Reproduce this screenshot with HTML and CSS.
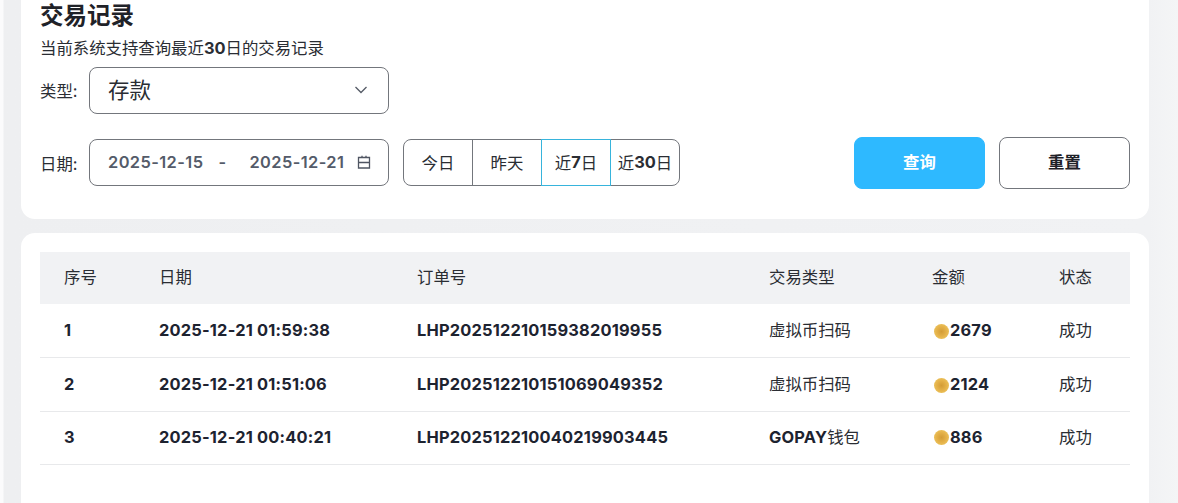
FILE: index.html
```html
<!DOCTYPE html>
<html lang="zh">
<head>
<meta charset="utf-8">
<title>交易记录</title>
<link rel="stylesheet" href="styles.css">
</head>
<body>
<main class="page">
  <section class="card filter-card">
    <h1 class="title">交易记录</h1>
    <p class="subtitle">当前系统支持查询最近<b>30</b>日的交易记录</p>
    <div class="field type-field">
      <span class="label">类型:</span>
      <div class="control select">
        <span class="select-value">存款</span>
        <svg class="chevron" width="14" height="8" viewBox="0 0 14 8"><path d="M1.5 1 7 6.5 12.5 1" fill="none" stroke="#555b66" stroke-width="1.3"/></svg>
      </div>
    </div>
    <div class="field date-field">
      <span class="label">日期:</span>
      <div class="control range">
        <span>2025-12-15</span><span class="dash">-</span><span>2025-12-21</span>
        <svg class="cal" width="14" height="14" viewBox="0 0 14 14"><path d="M1.5 2.5h11v10.5h-11zM1.5 7.5h11M5 2.5V.8M9 2.5V.8" fill="none" stroke="#4f5562" stroke-width="1.3"/></svg>
      </div>
      <div class="quick">
        <span class="quick-item">今日</span>
        <span class="quick-item">昨天</span>
        <span class="quick-item active">近<b>7</b>日</span>
        <span class="quick-item">近<b>30</b>日</span>
      </div>
      <div class="actions">
        <span class="btn primary">查询</span>
        <span class="btn">重置</span>
      </div>
    </div>
  </section>
  <section class="card table-card">
    <table class="records">
      <thead>
        <tr><th class="c1">序号</th><th class="c2">日期</th><th class="c3">订单号</th><th class="c4">交易类型</th><th class="c5">金额</th><th>状态</th></tr>
      </thead>
      <tbody>
        <tr><td class="strong">1</td><td class="strong">2025-12-21 01:59:38</td><td class="strong">LHP202512210159382019955</td><td>虚拟币扫码</td><td class="strong"><span class="amount"><i class="coin"></i>2679</span></td><td>成功</td></tr>
        <tr><td class="strong">2</td><td class="strong">2025-12-21 01:51:06</td><td class="strong">LHP202512210151069049352</td><td>虚拟币扫码</td><td class="strong"><span class="amount"><i class="coin"></i>2124</span></td><td>成功</td></tr>
        <tr><td class="strong">3</td><td class="strong">2025-12-21 00:40:21</td><td class="strong">LHP202512210040219903445</td><td><b>GOPAY</b>钱包</td><td class="strong"><span class="amount"><i class="coin"></i>886</span></td><td>成功</td></tr>
      </tbody>
    </table>
  </section>
</main>
</body>
</html>
```
FILE: styles.css
```css
* { box-sizing: border-box; }
html, body { margin: 0; height: 100%; }
body {
  height: 503px;
  overflow: hidden;
  background: linear-gradient(to right, #fbfbfc 0, #fbfbfc 3px, #eeeff1 4px, #f1f2f4 1149px, #f4f5f6 100%);
  color: #2a2d33;
  font-family: Inter, "Noto Sans CJK SC", sans-serif;
  font-size: 16.4px;
}
.page {
  display: flex;
  flex-direction: column;
  gap: 14px;
  height: 517px;
  overflow: hidden;
  margin: -14px 29px 0 21px;
}
.card { background: #fff; border-radius: 14px; padding: 0 19px; flex: none; }
.filter-card { height: 233px; padding-top: 15px; }
.title { margin: 0; font-size: 23.5px; line-height: 30px; font-weight: 700; color: #1f2228; }
.subtitle { margin: 7px 0 0; line-height: 20px; color: #2a2d33; font-size: 16.4px; }
.subtitle b { font-weight: 700; }
.field { display: flex; align-items: center; }
.type-field { margin-top: 9px; }
.date-field { margin-top: 23px; }
.label { flex: none; width: 49px; font-size: 16.4px; padding-bottom: 1px; white-space: nowrap; }
.control {
  display: flex;
  align-items: center;
  width: 300px;
  flex: none;
  border: 1px solid #73767c;
  border-radius: 8px;
  background: #fff;
  padding: 0 18px 0 18px;
}
.select { height: 47px; justify-content: space-between; font-size: 21.5px; padding-right: 20px; }
.select-value { padding-bottom: 4px; }
.chevron { margin-bottom: 2px; }
.range { height: 47px; margin-bottom: 1px; font-size: 16.4px; font-weight: 600; color: #545b69; letter-spacing: .42px; padding-bottom: 2px; padding-right: 17px; }
.dash { margin: 0 23px 0 15px; }
.cal { margin-left: auto; margin-top: 1px; }
.quick {
  display: flex;
  margin-left: 14px;
  margin-bottom: 1px;
  height: 47px;
  border: 1px solid #73767c;
  border-radius: 8px;
}
.quick-item {
  display: flex;
  align-items: center;
  justify-content: center;
  width: 69px;
  font-size: 16.4px;
  padding-bottom: 2px;
  border-left: 1px solid #73767c;
}
.quick-item:first-child { border-left: 0; width: 68px; }
.quick-item.active { border: 1px solid #37b4dc; margin: -1px 0; width: 70px; }
.quick-item.active + .quick-item { border-left: 0; }
.quick-item:last-child { width: 68px; }
.actions { display: flex; gap: 14px; margin-left: auto; }
.btn {
  display: flex;
  align-items: center;
  justify-content: center;
  width: 131px;
  height: 52px;
  border: 1px solid #73767c;
  border-radius: 8px;
  font-size: 16.4px;
  font-weight: 700;
  color: #1f2228;
  background: #fff;
  padding-bottom: 4px;
}
.btn.primary { background: #2eb9ff; border-color: #2eb9ff; color: #fff; }
.table-card { height: 300px; padding-top: 19px; }
.records { width: 100%; border-collapse: collapse; table-layout: fixed; font-size: 16.4px; }
.records th { height: 52px; background: #f1f2f4; font-weight: 400; text-align: left; padding: 0 0 5px 0; }
.records td { height: 54px; padding: 0 0 2px; border-bottom: 1px solid #e8e9eb; }
.records tbody tr:first-child td { height: 53px; }
.records tr:last-child td { height: 53px; padding-bottom: 3px; }
.records th.c1 { width: 119px; padding-left: 24px; }
.records th.c2 { width: 258px; }
.records th.c3 { width: 352px; }
.records th.c4 { width: 163px; }
.records th.c5 { width: 127px; }
.records td:first-child { padding-left: 24px; }
.records td.strong { padding-bottom: 0; color: #1d2330; letter-spacing: .2px; }
.records tr:last-child td.strong { padding-bottom: 2px; }
.records b { font-weight: 700; color: #1d2330; letter-spacing: .2px; }
.strong { font-weight: 700; }
.amount { display: flex; align-items: center; }
.coin {
  flex: none;
  width: 15px;
  height: 15px;
  margin: 2px 1px 0 2px;
  border-radius: 50%;
  background: radial-gradient(circle at 50% 50%, #d39c36 0, #e4b148 45%, #f2cf6a 100%);
}
```
